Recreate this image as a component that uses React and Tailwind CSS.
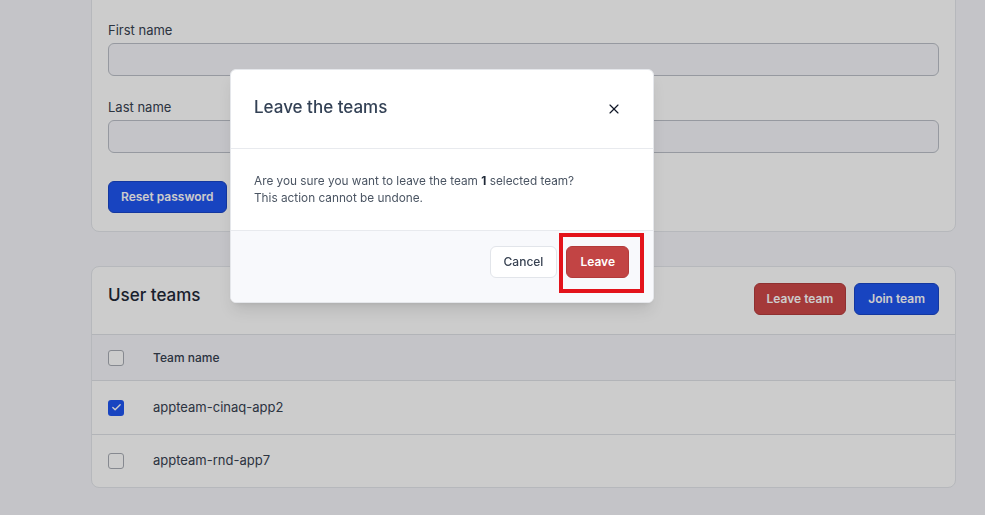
import { X, Check } from "lucide-react";

const teams = [
  { name: "appteam-cinaq-app2", checked: true },
  { name: "appteam-rnd-app7", checked: false },
];

function Checkbox({ checked }) {
  return checked ? (
    <span className="flex h-4 w-4 items-center justify-center rounded-[3px] bg-[#1f55f0]">
      <Check size={11} strokeWidth={3} className="text-white" />
    </span>
  ) : (
    <span className="block h-4 w-4 rounded-[3px] border border-[#a8acb4] bg-white" />
  );
}

function Field({ label }) {
  return (
    <div className="flex flex-col">
      <label className="mb-[5px] text-[13px] leading-[16px] text-[#374151]">{label}</label>
      <div className="h-[33px] rounded-md border border-[#bcc0c8] bg-[#f5f6fa]" />
    </div>
  );
}

export default function App() {
  return (
    <div
      className="relative h-[515px] overflow-hidden bg-[#f5f6fa] pl-[91px] pr-[29px]"
      style={{ fontFamily: "Inter, 'Noto Sans', sans-serif" }}
    >
      {/* Profile card */}
      <div className="-mt-[10px] flex flex-col gap-[23px] rounded-lg border border-[#e4e6eb] bg-white px-[16px] pb-[18px] pt-[31px]">
        <Field label="First name" />
        <Field label="Last name" />
        <div className="pt-[5px]">
          <button className="h-[32px] rounded-md border border-[#1845c8] bg-[#1f55f0] px-[12px] text-[12px] font-semibold text-white">
            Reset password
          </button>
        </div>
      </div>

      {/* User teams card */}
      <div className="mt-[34px] overflow-hidden rounded-lg border border-[#e4e6eb] bg-white">
        <div className="flex h-[67px] items-start justify-between px-[16px] pt-[16px]">
          <h2 className="text-[17px] font-medium leading-[24px] text-[#1f2937]">User teams</h2>
          <div className="flex gap-2">
            <button className="h-[32px] rounded-md border border-[#b33c3c] bg-[#ce4848] px-[12px] text-[12px] font-semibold text-white">
              Leave team
            </button>
            <button className="h-[32px] rounded-md border border-[#1845c8] bg-[#1f55f0] px-[13px] text-[12px] font-semibold text-white">
              Join team
            </button>
          </div>
        </div>
        <div className="flex h-[47px] items-center gap-[29px] border-y border-[#dfe1e6] bg-[#f5f6fa] px-[16px]">
          <Checkbox checked={false} />
          <span className="text-[12px] font-medium text-[#374151]">Team name</span>
        </div>
        {teams.map((t, i) => (
          <div
            key={t.name}
            className={`flex items-center gap-[29px] px-[16px] ${i === 0 ? "h-[54px] border-b border-[#dfe1e6]" : "h-[52px]"}`}
          >
            <Checkbox checked={t.checked} />
            <span className="text-[13px] text-[#374151]">{t.name}</span>
          </div>
        ))}
      </div>

      {/* Overlay */}
      <div className="fixed inset-0 bg-black/20" />

      {/* Modal */}
      <div className="absolute left-[230px] top-[69px] w-[424px] overflow-hidden rounded-md border border-[#e5e7eb] bg-white shadow-lg">
        <div className="flex h-[79px] items-center justify-between border-b border-[#e8eaee] pl-[23px] pr-[31px]">
          <h3 className="mt-[-3px] text-[17px] font-medium text-[#334155]">Leave the teams</h3>
          <X size={16} strokeWidth={1.75} className="text-[#111827]" />
        </div>
        <div className="flex h-[82px] flex-col justify-center border-b border-[#e8eaee] px-[23px] text-[11.8px] leading-[17px] text-[#4b5563]">
          <p>
            Are you sure you want to leave the team <span className="font-bold text-[#1f2937]">1</span> selected team?
          </p>
          <p>This action cannot be undone.</p>
        </div>
        <div className="flex h-[71px] items-start justify-end gap-[9px] bg-[#f8f9fc] pr-[24px] pt-[15px]">
          <button className="h-[32px] rounded-md border border-[#e2e5ea] bg-white px-[13px] text-[12px] font-medium text-[#374151]">
            Cancel
          </button>
          <div className="relative">
            <button className="h-[32px] rounded-md border border-[#b33a3a] bg-[#c24444] px-[13px] text-[12px] font-semibold text-white">
              Leave
            </button>
            <div className="pointer-events-none absolute -left-[7px] -right-[15px] -top-[13px] -bottom-[15px] border-4 border-[#e3131b]" />
          </div>
        </div>
      </div>
    </div>
  );
}
